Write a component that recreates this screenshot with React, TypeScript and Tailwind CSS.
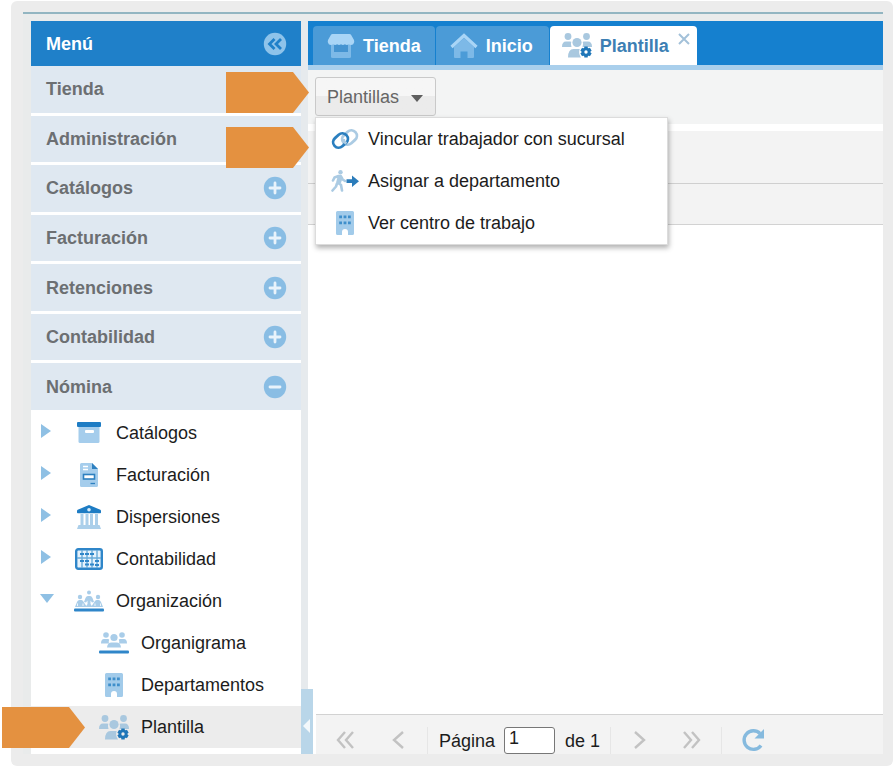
import React, { useState } from "react";

type IconProps = { className?: string };

const Chevrons = ({ d, className = "" }: { d: string; className?: string }) => (
    <svg viewBox="0 0 20 20" className={`h-5 w-5 ${className}`} fill="none" stroke="#c2c2c2" strokeWidth="2.4">
        <path d={d} />
    </svg>
);

const ArchiveIcon = () => (
    <svg viewBox="0 0 26 22" className="h-[22px] w-[26px]">
        <path d="M2.5 5h21v14.500a1.500 1.500 0 0 1-1.500 1.500h-18a1.500 1.500 0 0 1-1.500-1.500z" fill="#a5cdec" />
        <rect x="1" y="0" width="24" height="5" rx="1" fill="#1d7cc4" />
        <rect x="9" y="8" width="9" height="3" rx="1" fill="#fff" />
    </svg>
);

const InvoiceIcon = () => (
    <svg viewBox="0 0 18 24" className="h-6 w-[18px]">
        <path d="M1.500 0H12l6 6v16.500a1.500 1.500 0 0 1-1.500 1.500h-15A1.500 1.500 0 0 1 0 22.500v-21A1.500 1.500 0 0 1 1.500 0z" fill="#a5cdec" />
        <path d="M12 0l6 6h-6z" fill="#2d80c0" />
        <path d="M3 3.500h5M3 6.500h5" stroke="#fff" strokeWidth="1.300" />
        <rect x="3.500" y="11.500" width="11" height="4.500" fill="#fff" stroke="#2d80c0" strokeWidth="1.600" />
        <path d="M10.500 20.500h4.500" stroke="#2d80c0" strokeWidth="1.300" />
    </svg>
);

const BankIcon = () => (
    <svg viewBox="0 0 24 24" className="h-6 w-6">
        <path d="M3.500 9h3v11h-3zM8.500 9h3v11h-3zM13 9h3v11h-3zM18 9h3v11h-3zM1.500 20h21l1.500 4H0z" fill="#abcfea" />
        <path d="M12 0l11.300 4.700q.7.300.7 1V7.500q0 .8-.8.800H.8Q0 8.300 0 7.500V5.700q0-.7.7-1z" fill="#1d7cc4" />
        <circle cx="12" cy="4.800" r="1.800" fill="#d8ecfa" />
    </svg>
);

const AbacusIcon = () => (
    <svg viewBox="0 0 28 22" className="h-[22px] w-7">
        <rect x="1.200" y="1.200" width="25.600" height="19.600" rx="2" fill="#e5f2fc" stroke="#2f86c9" strokeWidth="2.400" />
        <path d="M7 2v18M12 2v18M17 2v18M22 2v18M2 10h24" stroke="#69acd9" strokeWidth="1.400" />
        <path d="M5 6h4M10 6h4M15 6h4M5 13h4M10 13h4M10 16.500h4M15 16.500h4M20 13h4M20 17h4" stroke="#2f86c9" strokeWidth="2.200" />
    </svg>
);

const OrganizationIcon = () => (
    <svg viewBox="0 0 30 22" className="h-[22px] w-[30px]">
        <g fill="#a9cde9">
            <circle cx="15" cy="2.500" r="2" />
            <circle cx="6" cy="7" r="2.200" />
            <circle cx="24" cy="7" r="2.200" />
            <path d="M10 12l1.500-4q.8-2 2.500-2h2q1.700 0 2.500 2l1.500 4-2 .5-1.500-2V14h-3v-3.500l-1.500 2z" />
            <path d="M1 17l2-5q.8-2 2.500-2h2q1.500 0 2.500 2.500l3 4.500zM29 17l-2-5q-.8-2-2.500-2h-2q-1.500 0-2.500 2.500L17 17z" />
            <path d="M11.500 17l2-3h3l2 3z" />
        </g>
        <path d="M3.500 16v-2.500M9 16v-2.500M21 16v-2.500M26.500 16v-2.500" stroke="#fff" strokeWidth=".8" />
        <rect y="18.500" width="30" height="3" rx="1" fill="#2f86c9" />
    </svg>
);

const TeamIcon = () => (
    <svg viewBox="0 0 30 22" className="h-[22px] w-[30px]">
        <g fill="#a9cde9">
            <circle cx="7" cy="3" r="2.800" />
            <circle cx="23" cy="3" r="2.800" />
            <circle cx="15" cy="5.500" r="3.600" />
            <path d="M5 7h4q.8 0 1.200.4-.8 2-.1 4.100H2q0-4.500 3-4.500zM25 7h-4q-.8 0-1.200.4.8 2 .1 4.100H28q0-4.500-3-4.500z" />
            <path d="M12.500 10.500h5q4 0 4.500 5H8q.5-5 4.500-5z" />
        </g>
        <rect y="18.500" width="30" height="3" rx="1" fill="#2f86c9" />
    </svg>
);

const BuildingIcon = () => (
    <svg viewBox="0 0 18 24" className="h-6 w-[18px]">
        <path d="M1.500 0h15A1.500 1.500 0 0 1 18 1.500v21a1.500 1.500 0 0 1-1.500 1.500H12v-3a3 3 0 0 0-6 0v3H1.500A1.500 1.500 0 0 1 0 22.500v-21A1.500 1.500 0 0 1 1.500 0z" fill="#a2cbea" />
        <path d="M3.200 4.500h2.800v2.800H3.200zM7.600 4.500h2.800v2.800H7.600zM12 4.500h2.800v2.800H12zM3.200 10.500h2.800v2.800H3.200zM7.600 10.500h2.800v2.800H7.600zM12 10.500h2.800v2.800H12z" fill="#3f8fcb" />
    </svg>
);

const StaffIcon = () => (
    <svg viewBox="0 0 30 25" className="h-[25px] w-[30px]">
        <g fill="#a9c8df">
            <circle cx="6" cy="3.500" r="3.400" />
            <circle cx="24.500" cy="3.500" r="3.400" />
            <circle cx="15" cy="9.500" r="4.600" />
            <path d="M4 8.500h4q.8 0 1.300.3-1 2.700.2 5.200H0q0-5.500 4-5.500zM26 8.500h-4q-.8 0-1.300.3 1 2.700-.2 5.200H30q0-5.500-4-5.500z" />
            <path d="M11.500 16h6.200q-1.700 4.500 1.300 8.500H6q0-8.500 5.500-8.500z" />
        </g>
        <g stroke="#1f76b8">
            <circle cx="24" cy="19" r="3.100" fill="none" strokeWidth="2.800" />
            <path d="M24 13.500v2.500M24 22v2.500M19.200 16.200l2.200 1.300M26.600 20.500l2.200 1.300M19.200 21.800l2.200-1.300M26.600 17.500l2.200-1.300" strokeWidth="3.400" />
        </g>
    </svg>
);

const LinkIcon = () => (
    <svg viewBox="0 0 28 22" className="h-[22px] w-7" fill="none" strokeWidth="2.800">
        <rect x="10.500" y="4" width="16" height="11" rx="5.500" transform="rotate(-42 18.500 9.500)" stroke="#abcbe3" />
        <rect x="1.500" y="7" width="16" height="11" rx="5.500" transform="rotate(-42 9.500 12.500)" stroke="#2b7fbf" />
        <path d="M12.500 11q.2 3.200 3 4.500" stroke="#abcbe3" />
    </svg>
);

const WalkIcon = () => (
    <svg viewBox="0 0 28 22" className="h-[22px] w-7">
        <circle cx="9.500" cy="2.300" r="2.200" fill="#abcbe3" />
        <path d="M2 10.500l1.500-3 4-1.500h2.200l2 3.500 2.300 1.500M8 6.500L6.500 12l3.500 3 1 5.500M6 13.500l-1 3-3.500 4M10 8l-1 4" fill="none" stroke="#abcbe3" strokeWidth="2.600" strokeLinecap="round" strokeLinejoin="round" />
        <path d="M15.500 9.300h5.500V5.500l7 5.700-7 5.700v-3.800h-5.500z" fill="#2b7cba" />
    </svg>
);

const StoreIcon = () => (
    <svg viewBox="0 0 28 26" className="h-[26px] w-7">
        <path d="M4 10h20v13.500q0 1.500-1.500 1.500h-17Q4 25 4 23.500z" fill="#7db9e7" />
        <path d="M7 10.500h14V19H7z" fill="#4594d1" />
        <path d="M5.500 1h17q1 0 1.500.8L27 7q1 2.500-.8 4.200-2.200 1.500-4.400 0-1.900 1.500-3.900 0-1.900 1.500-3.900 0-2 1.500-3.900 0-2 1.500-3.900 0-2.200 1.500-4.400 0Q0 9.500 1 7l3-5.200Q4.500 1 5.500 1z" fill="#a9d5f6" />
    </svg>
);

const HomeIcon = () => (
    <svg viewBox="0 0 28 26" className="h-[26px] w-7">
        <path d="M4 14L14 5l10 9v10q0 1-1 1h-5.500v-6.500h-7V25H5q-1 0-1-1z" fill="#7db9e7" />
        <path d="M1.500 14L14 2.500 26.500 14" fill="none" stroke="#a9d5f6" strokeWidth="3.200" />
    </svg>
);

const CircleIcon = ({ d }: { d: string }) => (
    <svg viewBox="0 0 24 24" className="h-6 w-6">
        <circle cx="12" cy="12" r="11.200" fill="#89bde4" />
        <path d={d} stroke="#e9f3fb" strokeWidth="2.800" strokeLinecap="round" />
    </svg>
);

const Pointer = ({ className = "" }: IconProps) => (
    <svg viewBox="0 0 83 41" className={`pointer-events-none absolute h-[41px] w-[83px] ${className}`}>
        <path d="M0 0h67l16 20.500L67 41H0z" fill="#e49140" />
    </svg>
);

const sections = ["Tienda", "Administración", "Catálogos", "Facturación", "Retenciones", "Contabilidad", "Nómina"];

const tree = [
    { label: "Catálogos", icon: <ArchiveIcon /> },
    { label: "Facturación", icon: <InvoiceIcon /> },
    { label: "Dispersiones", icon: <BankIcon /> },
    { label: "Contabilidad", icon: <AbacusIcon /> },
    { label: "Organización", icon: <OrganizationIcon />, open: true },
];

const children = [
    { label: "Organigrama", icon: <TeamIcon /> },
    { label: "Departamentos", icon: <BuildingIcon /> },
    { label: "Plantilla", icon: <StaffIcon /> },
];

const menuItems = [
    { label: "Vincular trabajador con sucursal", icon: <LinkIcon /> },
    { label: "Asignar a departamento", icon: <WalkIcon /> },
    { label: "Ver centro de trabajo", icon: <BuildingIcon /> },
];

const Sidebar = () => {
    const [selected, setSelected] = useState("Plantilla");

    return (
        <nav className="flex w-[270px] shrink-0 flex-col bg-white">
            <div className="flex h-[45px] items-center justify-between bg-[#1f80c9] pr-[14px] pl-[15px] font-bold text-white">
                <h2>Menú</h2>
                <button aria-label="Contraer menú">
                    <svg viewBox="0 0 24 24" className="h-6 w-6">
                        <circle cx="12" cy="12" r="11.200" fill="#8ec3ea" />
                        <path d="M11.500 7l-5 5 5 5M18 7l-5 5 5 5" fill="none" stroke="#1f80c9" strokeWidth="2.800" />
                    </svg>
                </button>
            </div>
            <ul className="grid h-86 auto-rows-fr gap-[3px]">
                {sections.map((name) => (
                    <li key={name}>
                        <button className="flex h-full w-full items-center justify-between bg-[#dfe8f1] pr-[14px] pl-[15px] font-bold text-[#6c6f72]">
                            {name}
                            <CircleIcon d={name === "Nómina" ? "M7 12h10" : "M7 12h10M12 7v10"} />
                        </button>
                    </li>
                ))}
            </ul>
            <ul className="pt-[2px]">
                {tree.map(({ label, icon, open }) => (
                    <li key={label}>
                        <button className="flex h-[42px] w-full items-center pl-[9px]">
                            <svg viewBox="0 0 14 14" className="mr-5 mb-1 h-[14px] w-[14px]">
                                <path d={open ? "M0 2h14L7 11z" : "M1 0l10 7-10 7z"} fill="#8fc0e4" />
                            </svg>
                            <span className="mr-3 flex w-[30px] justify-center">{icon}</span>
                            {label}
                        </button>
                    </li>
                ))}
                {children.map(({ label, icon }) => (
                    <li key={label}>
                        <button
                            onClick={() => setSelected(label)}
                            className={`flex h-[42px] w-full items-center pl-[68px] ${selected === label ? "bg-[#ececec]" : ""}`}
                        >
                            <span className="mr-3 flex w-[30px] justify-center">{icon}</span>
                            {label}
                        </button>
                    </li>
                ))}
            </ul>
        </nav>
    );
};

const Tabs = () => (
    <div className="flex h-[49px] items-end gap-px border-b-[5px] border-[#a9cfec] bg-[#1580cf] pl-[5px] font-bold">
        <button className="flex h-[39px] items-center gap-2 rounded-t bg-[#4b9bd7] pr-[14px] pl-[14px] text-white">
            <StoreIcon />
            Tienda
        </button>
        <button className="flex h-[39px] items-center gap-2 rounded-t bg-[#4b9bd7] pr-4 pl-[14px] text-white">
            <HomeIcon />
            Inicio
        </button>
        <div className="flex h-[39px] items-center rounded-t bg-white pr-[7px] pl-3 text-[#3d7fb4]">
            <button className="flex items-center gap-2">
                <StaffIcon />
                Plantilla
            </button>
            <button aria-label="Cerrar Plantilla" className="mb-[14px] ml-[9px]">
                <svg viewBox="0 0 12 12" className="h-3 w-3" stroke="#a3c1d9" strokeWidth="2">
                    <path d="M1 1l10 10M11 1L1 11" />
                </svg>
            </button>
        </div>
    </div>
);

const Toolbar = () => {
    const [open, setOpen] = useState(true);

    return (
        <div className="h-[54px] bg-[#f3f4f4] pt-[7px] pl-[7px]">
            <div className="relative inline-block">
                <button
                    onClick={() => setOpen(!open)}
                    className="flex h-[39px] w-[121px] items-center rounded-[3px] border border-[#c9c9c9] bg-linear-to-b from-[#f6f6f6] from-50% to-[#ebebeb] to-50% pl-[11px] text-[#666]"
                >
                    Plantillas
                    <svg viewBox="0 0 12 7" className="mt-1 ml-3 h-[7px] w-3">
                        <path d="M0 0h12L6 7z" fill="#5f5f5f" />
                    </svg>
                </button>
                {open && (
                    <ul className="absolute top-10 left-0 z-10 w-[353px] border border-[#dcdcdc] bg-white shadow-[1px_3px_5px_rgba(0,0,0,0.3)]">
                        {menuItems.map(({ label, icon }) => (
                            <li key={label}>
                                <button className="flex h-[42px] w-full items-center whitespace-nowrap pl-[14px]">
                                    <span className="mr-2 flex w-[30px] justify-center">{icon}</span>
                                    {label}
                                </button>
                            </li>
                        ))}
                    </ul>
                )}
            </div>
        </div>
    );
};

const Pager = () => (
    <div className="ml-2 flex h-10 items-end border-t border-[#d2d2d2] bg-[#f3f3f3] pl-5">
        <button aria-label="Primera página" className="mb-1"><Chevrons d="M9 2l-7 8 7 8M17 2l-7 8 7 8" /></button>
        <button aria-label="Página anterior" className="mb-1 ml-[35px]"><Chevrons d="M12 2l-9 8 9 8" /></button>
        <span className="ml-4 h-[27px] w-px bg-[#e6e6e6]" />
        <label htmlFor="page" className="ml-[11px]">Página</label>
        <input id="page" defaultValue="1" className="ml-[9px] h-[27px] w-[51px] rounded-[3px] border border-[#777] bg-white px-1 pb-1" />
        <span className="ml-[10px]">de 1</span>
        <span className="ml-[10px] h-[27px] w-px bg-[#e6e6e6]" />
        <button aria-label="Página siguiente" className="mb-1 ml-[18px]"><Chevrons d="M6 2l9 8-9 8" /></button>
        <button aria-label="Última página" className="mb-1 ml-8"><Chevrons d="M3 2l7 8-7 8M11 2l7 8-7 8" /></button>
        <span className="ml-5 h-[27px] w-px bg-[#e6e6e6]" />
        <button aria-label="Actualizar" className="mb-[2px] ml-[19px]">
            <svg viewBox="0 0 24 24" className="h-6 w-6">
                <path d="M20 17.500a9.300 9.300 0 1 1-1-12" fill="none" stroke="#86bade" strokeWidth="3.400" />
                <path d="M23 1v9.500H13.500z" fill="#86bade" />
            </svg>
        </button>
    </div>
);

export default function App() {
    return (
        <div className="relative flex min-h-screen bg-white pt-px pb-[2px] pl-[11px] font-['Liberation_Sans',Arial,sans-serif] text-[18px] leading-[26px] text-[#1c1c1c]">
            <div className="flex min-w-0 flex-1 rounded-[6px] bg-[#ececec] pt-[11px] pr-[10px] pb-3 pl-3">
                <div className="flex min-w-0 flex-1 border-t-2 border-[#92b5c1] bg-[#e9ebeb] pt-[7px] pl-2">
                    <Sidebar />
                    <div className="relative w-[7px] shrink-0 bg-[#e6eaed]">
                        <button aria-label="Ocultar panel" className="absolute bottom-0 left-0 z-10 flex h-[65px] w-3 items-center bg-[#b9d6e9]">
                            <svg viewBox="0 0 12 14" className="mt-2 h-[14px] w-3">
                                <path d="M9 0v14L2 7z" fill="#f3f8fb" />
                            </svg>
                        </button>
                    </div>
                    <main className="flex min-w-0 flex-1 flex-col bg-white">
                        <Tabs />
                        <Toolbar />
                        <div className="mt-[7px] h-[53px] border-b border-[#cfcfcf] bg-[#f3f3f3]" />
                        <div className="h-[41px] border-b border-[#d2d2d2] bg-[#f3f3f3]" />
                        <div className="flex-1" />
                        <Pager />
                    </main>
                </div>
            </div>
            <Pointer className="top-[72px] left-[226px]" />
            <Pointer className="top-[127px] left-[226px]" />
            <Pointer className="top-[707px] left-[2px]" />
        </div>
    );
}
